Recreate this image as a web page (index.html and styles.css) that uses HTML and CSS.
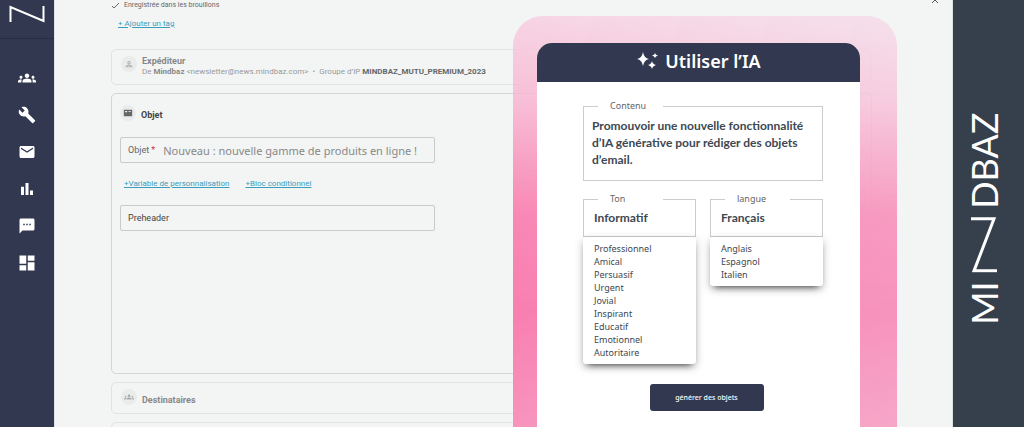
FILE: index.html
```html
<!DOCTYPE html>
<html lang="fr">
<head>
    <meta charset="UTF-8">
    <meta name="viewport" content="width=device-width, initial-scale=1.0">
    <title>Mindbaz - Utiliser l’IA</title>
    <link rel="stylesheet" href="styles.css">
</head>
<body>

<nav class="sidebar">
    <a class="sidebar-logo" href="#" aria-label="Accueil">
        <svg width="36" height="18" viewBox="0 0 36 18"><path d="M1.5 17V2L34.500 16V1" fill="none" stroke="#fff" stroke-width="2"/></svg>
    </a>
    <div class="sidebar-links">
        <a href="#" aria-label="Contacts">
            <svg viewBox="0 0 24 24"><path d="M12 12.750c1.630 0 3.070.39 4.240.9 1.080.48 1.760 1.560 1.760 2.730V18H6v-1.610c0-1.180.68-2.260 1.760-2.730 1.170-.52 2.610-.91 4.240-.91zM4 13c1.100 0 2-.9 2-2s-.9-2-2-2-2 .9-2 2 .9 2 2 2zm1.130 1.100C4.760 14.040 4.390 14 4 14c-.99 0-1.930.21-2.780.58C.48 14.900 0 15.620 0 16.430V18h4.500v-1.610c0-.83.23-1.610.63-2.290zM20 13c1.100 0 2-.9 2-2s-.9-2-2-2-2 .9-2 2 .9 2 2 2zm4 3.430c0-.81-.48-1.530-1.220-1.850C21.930 14.210 20.990 14 20 14c-.39 0-.76.04-1.130.1.400.68.63 1.460.63 2.290V18H24v-1.570zM12 6c1.660 0 3 1.340 3 3s-1.340 3-3 3-3-1.340-3-3 1.340-3 3-3z"/></svg>
        </a>
        <a href="#" aria-label="Outils">
            <svg viewBox="0 0 24 24"><path d="M22.700 19l-9.100-9.100c.9-2.300.4-5-1.500-6.900-2-2-5-2.400-7.400-1.300L9 6 6 9 1.600 4.700C.4 7.100.9 10.100 2.900 12.100c1.900 1.900 4.600 2.400 6.900 1.500l9.100 9.100c.4.4 1 .4 1.400 0l2.300-2.300c.5-.4.5-1.100.1-1.400z"/></svg>
        </a>
        <a href="#" aria-label="Messages">
            <svg viewBox="0 0 24 24"><path d="M20 4H4c-1.100 0-2 .9-2 2v12c0 1.100.9 2 2 2h16c1.100 0 2-.9 2-2V6c0-1.100-.9-2-2-2zm0 4l-8 5-8-5V6l8 5 8-5v2z"/></svg>
        </a>
        <a href="#" aria-label="Statistiques">
            <svg viewBox="0 0 24 24"><path d="M10 20h4V4h-4v16zm-6 0h4V9H4v11zm12-6v6h4v-6h-4z"/></svg>
        </a>
        <a href="#" aria-label="SMS">
            <svg viewBox="0 0 24 24"><path d="M20 2H4c-1.100 0-2 .9-2 2v18l4-4h14c1.100 0 2-.9 2-2V4c0-1.100-.9-2-2-2zM9 11H7V9h2v2zm4 0h-2V9h2v2zm4 0h-2V9h2v2z"/></svg>
        </a>
        <a href="#" aria-label="Tableau de bord">
            <svg viewBox="0 0 24 24"><path d="M2 13h9V2H2v11zm0 9h9v-7H2v7zm11 0h9V11h-9v11zm0-20v7h9V2h-9z"/></svg>
        </a>
    </div>
</nav>

<main class="page">
    <div class="editor">
        <p class="status">
            <svg width="9" height="7" viewBox="0 0 9 7"><path d="M1 4l2 2 5-5" fill="none" stroke="#666" stroke-width="1"/></svg>
            Enregistrée dans les brouillons
        </p>
        <a class="link tag-link" href="#">+ Ajouter un tag</a>

        <section class="card muted">
            <span class="card-icon">
                <svg viewBox="0 0 24 24"><path d="M12 5a4 4 0 1 1 0 8 4 4 0 0 1 0-8zm0 2a2 2 0 1 0 0 4 2 2 0 0 0 0-4zm0 7c3 0 8 1.500 8 4v2H4v-2c0-2.500 5-4 8-4zm0 2c-3 0-5 1-6 2h12c-1-1-3-2-6-2z" fill-rule="evenodd"/></svg>
            </span>
            <div>
                <h2>Expéditeur</h2>
                <p class="sender">
                    <span>De <b>Mindbaz</b> &lt;newsletter@news.mindbaz.com&gt;</span>
                    <span>•</span>
                    <span>Groupe d’IP <b class="group">MINDBAZ_MUTU_PREMIUM_2023</b></span>
                </p>
            </div>
        </section>

        <section class="card subject">
            <header class="card-head">
                <span class="card-icon">
                    <svg viewBox="0 0 24 24"><path d="M2 4h20v16H2zM5 7v3h5V7zm8 0v2h6V7z" fill-rule="evenodd"/></svg>
                </span>
                <h2>Objet</h2>
            </header>
            <div class="field">
                <label for="objet">Objet <span class="required">*</span></label>
                <input id="objet" type="text" value="Nouveau : nouvelle gamme de produits en ligne !">
            </div>
            <div class="links">
                <a class="link" href="#">+Variable de personnalisation</a>
                <a class="link" href="#">+Bloc conditionnel</a>
            </div>
            <div class="field">
                <input class="preheader" type="text" placeholder="Preheader" aria-label="Preheader">
            </div>
        </section>

        <section class="card muted recipients">
            <span class="card-icon">
                <svg viewBox="0 0 24 24"><path d="M12 6a3 3 0 1 1 0 6 3 3 0 0 1 0-6zm-6 12v-2c0-4 12-4 12 0v2zM4 9a2 2 0 1 1 0 4 2 2 0 0 1 0-4zm16 0a2 2 0 1 1 0 4 2 2 0 0 1 0-4zM0 18v-2c0-1 2-2 5-2l-1 4zm24 0v-2c0-1-2-2-5-2l1 4z"/></svg>
            </span>
            <h2>Destinataires</h2>
        </section>
        <section class="card muted"></section>
    </div>

    <button class="close" type="button" aria-label="Fermer">
        <svg width="8" height="8" viewBox="0 0 8 8"><path d="M1 1l6 6M7 1L1 7" stroke="#555" stroke-width="1"/></svg>
    </button>

    <aside class="ai-glow">
        <form class="ai-dialog">
            <header class="ai-title">
                <svg width="22" height="20" viewBox="0 0 22 20"><path d="M7 1q1 6 6 7-5 1-6 7-1-6-6-7 5-1 6-7zM16 10q.6 3 4 4-3.400 1-4 4-.6-3-4-4 3.400-1 4-4zM19 2q.4 2 3 2.500-2.600.5-3 2.500-.4-2-3-2.500 2.600-.5 3-2.500z" fill="#fff"/></svg>
                <h1>Utiliser l’IA</h1>
            </header>
            <div class="ai-body">
                <fieldset class="box">
                    <legend><label for="contenu">Contenu</label></legend>
                    <textarea id="contenu" rows="3">Promouvoir une nouvelle fonctionnalité d’IA générative pour rédiger des objets d’email.</textarea>
                </fieldset>
                <div class="choices">
                    <div class="choice">
                        <fieldset class="box">
                            <legend><label for="ton">Ton</label></legend>
                            <select id="ton"><option>Informatif</option></select>
                        </fieldset>
                        <ul class="menu">
                            <li>Professionnel</li>
                            <li>Amical</li>
                            <li>Persuasif</li>
                            <li>Urgent</li>
                            <li>Jovial</li>
                            <li>Inspirant</li>
                            <li>Educatif</li>
                            <li>Emotionnel</li>
                            <li>Autoritaire</li>
                        </ul>
                    </div>
                    <div class="choice">
                        <fieldset class="box">
                            <legend><label for="langue">langue</label></legend>
                            <select id="langue"><option>Français</option></select>
                        </fieldset>
                        <ul class="menu">
                            <li>Anglais</li>
                            <li>Espagnol</li>
                            <li>Italien</li>
                        </ul>
                    </div>
                </div>
                <button class="generate" type="button">générer des objets</button>
            </div>
        </form>
    </aside>
</main>

<div class="brand">
    <div class="wordmark">
        <span>MI</span>
        <svg width="26" height="56" viewBox="0 0 26 56"><path d="M26 54H3L23 2H0" fill="none" stroke="#fff" stroke-width="3"/></svg>
        <span>DBAZ</span>
    </div>
</div>

</body>
</html>
```
FILE: styles.css
```css
* {
    box-sizing: border-box;
}
body {
    display: flex;
    height: 100vh;
    margin: 0;
    overflow: hidden;
    background-color: #f3f5f5;
    color: #444;
    font-family: Roboto, "Liberation Sans", sans-serif;
    font-size: 8px;
    line-height: 10px;
}
h1, h2, p, ul {
    margin: 0;
    padding: 0;
}
svg {
    display: block;
    flex-shrink: 0;
}
input, select, textarea, button {
    margin: 0;
    padding: 0;
    border: 0;
    background: none;
    color: inherit;
    font-family: inherit;
    outline: none;
}

/* Left navigation */
.sidebar {
    flex: 0 0 55px;
    background-color: #31384f;
    border-right: 1px solid #dfe2ea;
}
.sidebar-logo {
    display: flex;
    justify-content: center;
    height: 39px;
    padding-top: 5px;
    border-bottom: 1px solid #272d42;
}
.sidebar-links {
    display: flex;
    flex-direction: column;
    align-items: center;
    gap: 19px;
    padding-top: 30px;
}
.sidebar-links svg {
    width: 18px;
    height: 18px;
    fill: #fff;
}

/* Campaign editor */
.page {
    position: relative;
    flex: 1;
    min-width: 0;
}
.editor {
    height: 100%;
    padding-left: 56px;
    padding-right: 80px;
    overflow: hidden;
}
.status {
    display: flex;
    align-items: center;
    gap: 4px;
    color: #666;
    font-size: 7px;
}
.link {
    color: #3a9dbb;
    text-decoration: underline;
}
.tag-link {
    display: block;
    width: max-content;
    margin: 9px 0 20px 7px;
}
.card {
    display: flex;
    gap: 5px;
    margin-bottom: 8px;
    padding: 6px 9px;
    border: 1px solid #dcdfdf;
    border-radius: 5px;
}
.card h2 {
    font-size: 9px;
    line-height: 11px;
    font-weight: 700;
}
.muted {
    min-height: 36px;
    border-color: #e0e3e3;
    color: #999;
}
.muted h2, .sender b {
    color: #888;
}
.sender .group {
    color: #666;
}
.card-icon {
    display: flex;
    flex-shrink: 0;
    align-items: center;
    justify-content: center;
    width: 16px;
    height: 16px;
    border-radius: 50%;
    background-color: #eaecec;
}
.card-icon svg {
    width: 10px;
    height: 10px;
    fill: #666;
}
.muted .card-icon svg {
    fill: #aaa;
}
.sender {
    display: flex;
    gap: 4px;
}
.sender b {
    font-weight: 700;
}
.subject {
    flex-direction: column;
    gap: 16px;
    min-height: 281px;
    padding: 11px 8px;
    border-color: #d3d6d6;
}
.card-head {
    display: flex;
    align-items: flex-end;
    gap: 5px;
}
.field {
    display: flex;
    align-items: center;
    gap: 8px;
    width: 315px;
    height: 26px;
    padding: 0 7px;
    border: 1px solid #c8cbcb;
    border-radius: 2px;
}
.field label {
    flex-shrink: 0;
    color: #666;
    font-size: 9px;
}
.required {
    color: #c33;
}
.field input {
    flex: 1;
    min-width: 0;
    color: #888;
    font-family: "Noto Sans", sans-serif;
    font-size: 11px;
}
.field .preheader {
    font-family: inherit;
    font-size: 9px;
}
.preheader::placeholder {
    color: #444;
    opacity: 1;
}
.links {
    display: flex;
    gap: 16px;
    padding-left: 4px;
}
.recipients {
    min-height: 32px;
}
.recipients h2 {
    padding-top: 6px;
}
.close {
    position: absolute;
    top: -4px;
    right: 13px;
    cursor: pointer;
}

/* AI assistant, laid over the editor */
.ai-glow {
    position: absolute;
    top: 16px;
    right: 55px;
    bottom: 0;
    width: 384px;
    padding: 27px 37px 0 24px;
    border-radius: 30px 30px 0 0;
    background: linear-gradient(100deg, rgba(249, 130, 178, 0.15), rgba(243, 225, 235, 0.25)), linear-gradient(rgba(247, 222, 233, 0.8), rgba(248, 190, 215, 0.8) 20%, rgba(248, 128, 176, 0.95) 48%, #f87bae 72%, #f793bc);
}
.ai-dialog {
    height: 100%;
    background-color: #fff;
    border-radius: 15px 15px 0 0;
    color: #3c4852;
    font-family: "Noto Sans", sans-serif;
}
.ai-title {
    display: flex;
    align-items: center;
    justify-content: center;
    gap: 7px;
    height: 39px;
    padding-bottom: 3px;
    border-radius: 15px 15px 0 0;
    background-color: #31384f;
    color: #fff;
}
.ai-title h1 {
    font-size: 18px;
    line-height: 24px;
    font-weight: 600;
}
.ai-body {
    display: flex;
    flex-direction: column;
    gap: 13px;
    padding: 19px 30px 0 46px;
}
.box {
    min-width: 0;
    margin: 0 7px 0 0;
    padding: 0 8px;
    border: 1px solid #ccc;
}
.box legend {
    width: 65px;
    margin-left: 6px;
    padding: 0 12px;
    color: #666;
    font-size: 9px;
    line-height: 10px;
}
.box textarea, .box select {
    display: block;
    width: 100%;
    font-family: Lato, sans-serif;
    font-size: 12px;
    font-weight: 700;
}
.box textarea {
    height: 69px;
    padding-top: 6px;
    resize: none;
    overflow: hidden;
    line-height: 17px;
}
.choices {
    display: grid;
    grid-template-columns: 1fr 1fr;
    gap: 14px;
    margin-right: 7px;
}
.choice .box {
    margin: 0;
    padding: 0 10px;
}
.choice legend {
    margin-left: 4px;
}
.box select {
    height: 32px;
    padding-bottom: 6px;
    appearance: none;
}
.menu {
    padding: 5px 11px;
    list-style: none;
    border-radius: 3px;
    background-color: #fff;
    box-shadow: 0 5px 7px -5px rgba(0, 0, 0, 0.8), 0 3px 8px rgba(0, 0, 0, 0.25);
    font-size: 9px;
    line-height: 13px;
}
.generate {
    align-self: center;
    width: 114px;
    height: 27px;
    margin-top: 7px;
    border-radius: 3px;
    background-color: #31384f;
    color: #fff;
    font-size: 7px;
    font-weight: 500;
    cursor: pointer;
}

/* Brand strip */
.brand {
    display: flex;
    flex: 0 0 72px;
    align-items: center;
    justify-content: center;
    padding: 10px 9px 0 0;
    border-left: 1px solid #dbe5e0;
    background-color: #35404c;
}
.wordmark {
    display: flex;
    align-items: center;
    gap: 8px;
    writing-mode: vertical-rl;
    transform: rotate(180deg);
    color: #fff;
    font-family: Lato, sans-serif;
    font-size: 36px;
    line-height: 44px;
}
```
